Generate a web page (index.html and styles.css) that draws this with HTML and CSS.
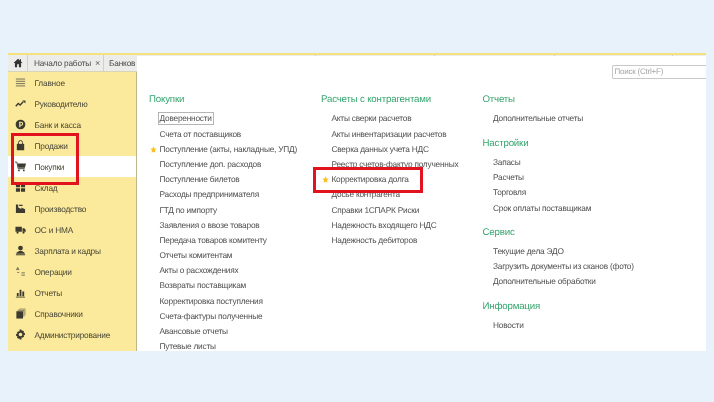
FILE: index.html
```html
<!DOCTYPE html>
<html lang="ru">
<head>
<meta charset="utf-8">
<title>Покупки</title>
<link rel="stylesheet" href="styles.css">
</head>
<body>
<svg class="defs" width="0" height="0" aria-hidden="true">
  <symbol id="star" viewBox="0 0 10 10"><path d="M5 .4l1.400 3 3.200.4-2.400 2.200.7 3.300L5 8.600 2.100 9.300l.7-3.300L.4 3.800l3.200-.4z"/></symbol>
</svg>
<div class="app">
  <div class="tabs">
    <div class="tab tab-home"><svg class="home" viewBox="0 0 12 12"><path d="M6 1L.6 6h1.700v5h2.600V7.600h2.200V11h2.600V6h1.700L9.600 4.200V1.600H8.200v1.300z"/></svg></div>
    <div class="tab tab-start">Начало работы <span class="close">×</span></div>
    <div class="tab tab-bank">Банков</div>
    <div class="tab tab-b"></div>
    <div class="tab tab-c"></div>
    <div class="tab tab-d"></div>
  </div>

  <nav class="side">
    <div class="side-item"><svg class="ico" viewBox="0 0 12 12"><path class="thin" d="M1 2.200h10M1 4.700h10M1 7.200h10M1 9.700h10"/></svg>Главное</div>
    <div class="side-item"><svg class="ico" viewBox="0 0 12 12"><path class="line" d="M.8 9l2.800-3 2 1.600L9 4"/><path d="M8 2.600h3.400V6z"/></svg>Руководителю</div>
    <div class="side-item"><svg class="ico" viewBox="0 0 12 12"><path fill-rule="evenodd" d="M6 .7a5.300 5.300 0 1 1 0 10.600A5.300 5.300 0 0 1 6 .7zM4.600 3v6h1.300V7.400h.8a2.200 2.200 0 0 0 0-4.400zm1.300 1.200h.8a1 1 0 0 1 0 2h-.8z"/></svg>Банк и касса</div>
    <div class="side-item"><svg class="ico" viewBox="0 0 12 12"><path d="M2 4.200h8v7H2z"/><path class="line-thin" d="M3.800 4.500V2.800a2.200 2.200 0 0 1 4.400 0v1.700"/></svg>Продажи</div>
    <div class="side-item side-active"><svg class="ico" viewBox="0 0 12 12"><path d="M2.800 2.600H12L10.800 7.400H3.800z"/><path class="line-thin" d="M0 1.200h2l1.500 7.200h7"/><circle cx="4.300" cy="10.300" r="1"/><circle cx="9.600" cy="10.300" r="1"/></svg>Покупки</div>
    <div class="side-item"><svg class="ico" viewBox="0 0 12 12"><path d="M1 1.500h4.500v4.200H1zM6.500 1.500H11v4.200H6.500zM1 6.700h4.500v3.800H1zM6.500 6.700H11v3.800H6.500z"/></svg>Склад</div>
    <div class="side-item"><svg class="ico" viewBox="0 0 12 12"><path d="M1 1.500h2.500v3.500L7 6.500V5l4 1.800v4H1zM4.500 2h3.800v1.200H4.500z"/></svg>Производство</div>
    <div class="side-item"><svg class="ico" viewBox="0 0 12 12"><path d="M.500 3h7v5.500h-7zM8.200 4.500h2l1.500 2v2H8.200z"/><circle cx="2.800" cy="9.300" r="1.200"/><circle cx="9.300" cy="9.300" r="1.200"/></svg>ОС и НМА</div>
    <div class="side-item"><svg class="ico" viewBox="0 0 12 12"><circle cx="6" cy="3.300" r="2.600"/><path d="M1.500 8.500L4.500 6.500h3l3 2V9.500h-9zM1 10h10v1.200H1z"/></svg>Зарплата и кадры</div>
    <div class="side-item"><svg class="ico" viewBox="0 0 12 12"><path class="thin" d="M1.500 4.500L3 1.500l1.300 3M2 3.600h2M7 7.500h3.800M7 10h3.800M2.500 7h2"/></svg>Операции</div>
    <div class="side-item"><svg class="ico" viewBox="0 0 12 12"><path d="M2 6.500h2v3.500H2zM5 3h2v7H5zM8 4.800h2V10H8zM1 10.500h10v1H1z"/></svg>Отчеты</div>
    <div class="side-item"><svg class="ico" viewBox="0 0 12 12"><path d="M1.500 3.500h7.200v8H1.500z"/><path fill-opacity=".65" d="M3 2h7.200v7.500H9.200V3H3z"/><path fill-opacity=".45" d="M4.500.5h7v7.500h-1V1.500H4.500z"/></svg>Справочники</div>
    <div class="side-item"><svg class="ico" viewBox="0 0 12 12"><path fill-rule="evenodd" d="M5 .5h2l.3 1.500 1-.5 1.600 1.300-.6 1.200 1.500.4v2.200l-1.500.4.600 1.200-1.600 1.300-1-.5L7 11.500H5l-.3-1.500-1 .5L2.100 9.200l.6-1.200L1.200 7.600V5.400l1.500-.4-.6-1.200 1.600-1.300 1 .5zM6 4a2 2 0 1 0 0 4 2 2 0 0 0 0-4z"/></svg>Администрирование</div>
  </nav>

  <main class="panel">
    <div class="search-row"><div class="search">Поиск (Ctrl+F)</div></div>
    <div class="columns">
      <section class="col">
        <h2>Покупки</h2>
        <ul>
          <li><span class="slot"></span><span class="focus">Доверенности</span></li>
          <li><span class="slot"></span>Счета от поставщиков</li>
          <li><span class="slot"><svg class="star"><use href="#star"/></svg></span>Поступление (акты, накладные, УПД)</li>
          <li><span class="slot"></span>Поступление доп. расходов</li>
          <li><span class="slot"></span>Поступление билетов</li>
          <li><span class="slot"></span>Расходы предпринимателя</li>
          <li><span class="slot"></span>ГТД по импорту</li>
          <li><span class="slot"></span>Заявления о ввозе товаров</li>
          <li><span class="slot"></span>Передача товаров комитенту</li>
          <li><span class="slot"></span>Отчеты комитентам</li>
          <li><span class="slot"></span>Акты о расхождениях</li>
          <li><span class="slot"></span>Возвраты поставщикам</li>
          <li><span class="slot"></span>Корректировка поступления</li>
          <li><span class="slot"></span>Счета-фактуры полученные</li>
          <li><span class="slot"></span>Авансовые отчеты</li>
          <li><span class="slot"></span>Путевые листы</li>
        </ul>
      </section>
      <section class="col">
        <h2>Расчеты с контрагентами</h2>
        <ul>
          <li><span class="slot"></span>Акты сверки расчетов</li>
          <li><span class="slot"></span>Акты инвентаризации расчетов</li>
          <li><span class="slot"></span>Сверка данных учета НДС</li>
          <li><span class="slot"></span>Реестр счетов-фактур полученных</li>
          <li><span class="slot"><svg class="star"><use href="#star"/></svg></span>Корректировка долга</li>
          <li><span class="slot"></span>Досье контрагента</li>
          <li><span class="slot"></span>Справки 1СПАРК Риски</li>
          <li><span class="slot"></span>Надежность входящего НДС</li>
          <li><span class="slot"></span>Надежность дебиторов</li>
        </ul>
      </section>
      <section class="col">
        <h2>Отчеты</h2>
        <ul><li><span class="slot"></span>Дополнительные отчеты</li></ul>
        <h2>Настройки</h2>
        <ul>
          <li><span class="slot"></span>Запасы</li>
          <li><span class="slot"></span>Расчеты</li>
          <li><span class="slot"></span>Торговля</li>
          <li><span class="slot"></span>Срок оплаты поставщикам</li>
        </ul>
        <h2>Сервис</h2>
        <ul>
          <li><span class="slot"></span>Текущие дела ЭДО</li>
          <li><span class="slot"></span>Загрузить документы из сканов (фото)</li>
          <li><span class="slot"></span>Дополнительные обработки</li>
        </ul>
        <h2>Информация</h2>
        <ul><li><span class="slot"></span>Новости</li></ul>
      </section>
    </div>
  </main>

  <div class="mark mark-side"></div>
  <div class="mark mark-debt"></div>
</div>
</body>
</html>
```
FILE: styles.css
```css
* { box-sizing: border-box; }
html, body { height: 100%; }
body {
  margin: 0;
  padding: 53px 8px 51px;
  background: #e8f2fb;
  font-family: "Liberation Sans", Arial, sans-serif;
  text-rendering: geometricPrecision;
  overflow: hidden;
}
.defs { position: absolute; }
.app {
  position: relative;
  height: 298px;
  display: grid;
  grid-template-columns: 129px 1fr;
  grid-template-rows: 19px 1fr;
  background: #fff;
  overflow: hidden;
  filter: blur(0.45px);
}
.tabs {
  grid-column: 1 / 3;
  grid-row: 1;
  display: flex;
  background: #ececea;
  border-top: 2px solid #f6e27c;
  border-bottom: 1px solid #d8d4b8;
  color: #4a4a4a;
  font-size: 8.300px;
  letter-spacing: -.18px;
}
.tab {
  display: flex;
  align-items: center;
  border-right: 1px solid #cfcfcf;
  white-space: nowrap;
}
.tab-home { width: 20px; justify-content: center; }
.tab-start { width: 76px; padding-left: 6px; }
.tab-bank { width: 212px; padding-left: 5px; }
.tab-b { width: 119px; }
.tab-c { width: 120px; }
.tab-d { width: 118px; }
.home { width: 10px; height: 10px; fill: #333; }
.close { margin-left: 4px; color: #666; font-size: 9px; }

.side {
  grid-column: 1;
  grid-row: 2;
  background: #fbe99c;
  border-right: 1px solid #bdb68e;
  color: #4a4836;
  font-size: 8.300px;
  letter-spacing: -.2px;
}
.side-item {
  height: 21px;
  display: flex;
  align-items: center;
  gap: 8.500px;
  padding-left: 7px;
}
.side-active { background: #fff; }
.ico { width: 11px; height: 11px; flex: none; fill: #3d3b30; }
.thin { fill: none; stroke: #6a6850; stroke-width: 1; }
.line { fill: none; stroke: #3d3b30; stroke-width: 1.500; }
.line-thin { fill: none; stroke: #3d3b30; stroke-width: 1; }

.panel {
  grid-column: 2;
  grid-row: 1 / 3;
  margin-top: 3px;
  position: relative;
  z-index: 1;
  background: #fff;
  overflow: hidden;
  color: #505050;
  font-size: 8.300px;
  letter-spacing: -.22px;
}
.search-row {
  display: flex;
  justify-content: flex-end;
  padding-top: 9px;
  height: 37px;
}
.search {
  width: 94px;
  height: 14px;
  border: 1px solid #c8c8c8;
  border-right: 0;
  border-radius: 2px 0 0 2px;
  padding-left: 1.500px;
  color: #a4a4a4;
  font-size: 8px;
  line-height: 12px;
}
.columns {
  display: grid;
  grid-template-columns: 172px 161.500px 1fr;
  padding-left: 12px;
}
h2 {
  margin: 0 0 4.400px;
  height: 14px;
  font-size: 9.700px;
  font-weight: 400;
  letter-spacing: -.18px;
  line-height: 14px;
  color: #36a56f;
}
ul {
  margin: 0 0 10px;
  padding: 0;
  list-style: none;
}
li {
  height: 15.180px;
  display: flex;
  align-items: center;
  white-space: nowrap;
  line-height: 11px;
}
.slot {
  width: 10.500px;
  flex: none;
  display: flex;
  align-items: center;
  padding-left: 1px;
}
.star { width: 7px; height: 7px; fill: #f7c325; }
.focus {
  outline: 1px solid #b5b5b5;
  outline-offset: 0;
  margin-left: -1px;
  padding: 0 1px;
}
.mark {
  position: absolute;
  z-index: 2;
  border: 3px solid #e1131d;
}
.mark-side { left: 3px; top: 80px; width: 68px; height: 52px; }
.mark-debt { left: 305px; top: 114px; width: 110px; height: 26px; }
```
